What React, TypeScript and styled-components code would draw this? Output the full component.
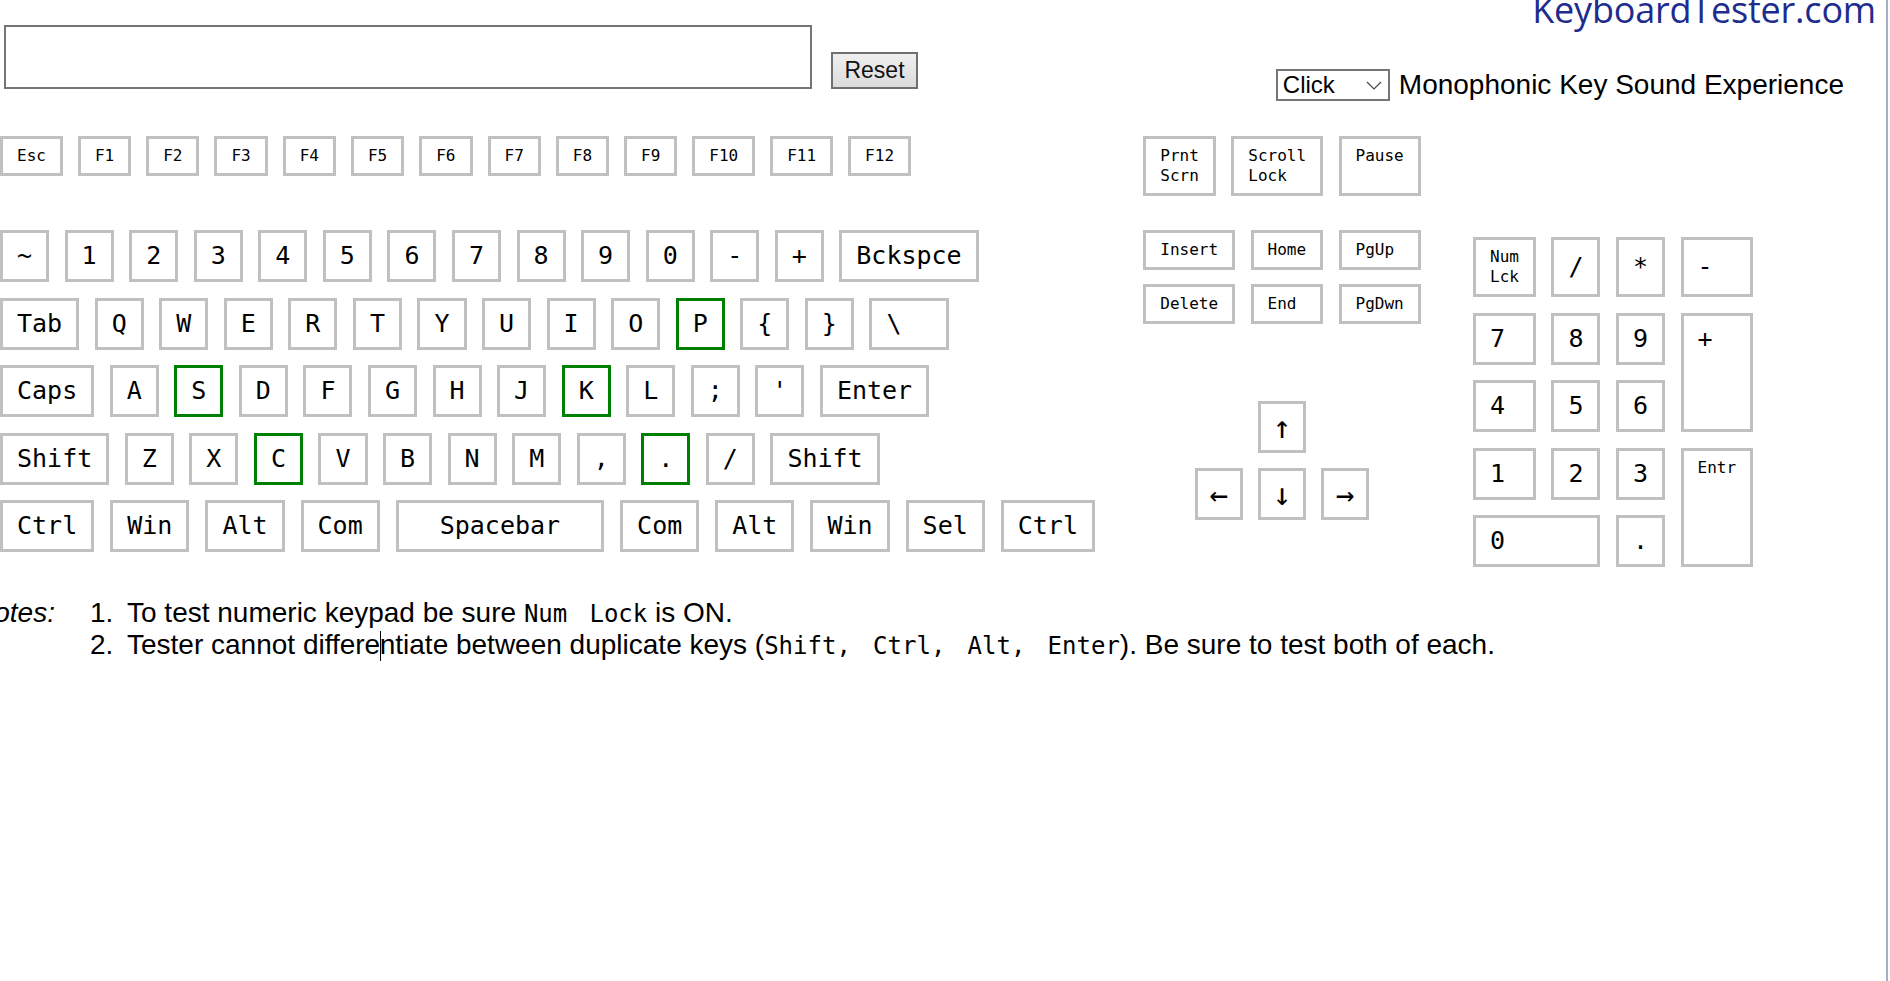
import React from "react";
import styled, { createGlobalStyle, css } from "styled-components";

const MONO = `"DejaVu Sans Mono", "Liberation Mono", monospace`;
const SANS = `"Liberation Sans", Arial, sans-serif`;

const GlobalStyle = createGlobalStyle`
  html, body {
    margin: 0;
    padding: 0;
    background: #fff;
  }
  body {
    font-family: ${SANS};
    color: #000;
    overflow: hidden;
  }
`;

const Page = styled.div`
  box-sizing: border-box;
  width: 1888px;
  min-height: 981px;
  border-right: 2px solid #a3b1c6;
`;

/* ---------- header ---------- */

const Header = styled.header`
  display: flex;
  justify-content: space-between;
  align-items: flex-start;
`;

const EntryRow = styled.div`
  display: flex;
  align-items: flex-end;
  gap: 19px;
  margin: 25px 0 0 4px;
`;

const TextEntry = styled.input`
  box-sizing: border-box;
  width: 808px;
  height: 64px;
  margin: 0;
  padding: 0 6px;
  border: 2px solid #767676;
  background: #fff;
  font: 24px ${SANS};
  outline: none;
`;

const ResetButton = styled.button`
  box-sizing: border-box;
  width: 87px;
  height: 37px;
  margin: 0;
  padding: 0;
  border: 2px solid #707070;
  background: linear-gradient(#efefef, #dcdcdc);
  color: #111;
  font: 23px ${SANS};
`;

const Branding = styled.div`
  display: flex;
  flex-direction: column;
  align-items: flex-end;
  padding-right: 10px;
`;

const Logo = styled.div`
  margin-top: -8px;
  color: #1e2c8e;
  font-family: "Open Sans", sans-serif;
  font-size: 36px;
  line-height: 36px;
  letter-spacing: -0.2px;
`;

const SoundRow = styled.div`
  display: flex;
  align-items: center;
  gap: 9px;
  margin: 41px 32px 0 0;
`;

const SoundSelect = styled.div`
  box-sizing: border-box;
  display: flex;
  align-items: center;
  justify-content: space-between;
  width: 114px;
  height: 32px;
  padding: 0 6px 0 5px;
  border: 2px solid #767676;
  font: 24px ${SANS};
`;

const SoundLabel = styled.span`
  font-size: 28px;
`;

/* ---------- keyboard ---------- */

const Keyboard = styled.section`
  display: flex;
  align-items: flex-start;
  margin-top: 35px;
`;

const MainBlock = styled.div`
  flex: none;
  width: 1143px;
`;

const FRow = styled.div`
  display: flex;
  gap: 15px;
`;

const Rows = styled.div`
  display: flex;
  flex-direction: column;
  gap: 15.5px;
  margin-top: 54px;
`;

const Row = styled.div<{ $gap?: number }>`
  display: flex;
  gap: ${(p) => p.$gap ?? 15.5}px;
`;

const NavBlock = styled.div`
  flex: none;
  display: flex;
  flex-direction: column;
  align-items: center;
  width: 278px;
  margin-right: 52px;
`;

const SysRow = styled.div`
  display: flex;
  gap: 15.5px;
`;

const EditGrid = styled.div`
  display: grid;
  grid-template-columns: repeat(3, auto);
  gap: 14px 15.5px;
  margin-top: 34px;
`;

const ArrowPad = styled.div`
  display: grid;
  grid-template-columns: repeat(3, auto);
  gap: 15px;
  margin-top: 77px;
`;

const Numpad = styled.div`
  display: grid;
  grid-template-columns: repeat(4, auto);
  grid-template-rows: 60px repeat(4, 52px);
  gap: 15.5px;
  margin-top: 101px;
`;

type KeyProps = {
  $small?: boolean;
  $on?: boolean;
  $top?: boolean;
  $arrow?: boolean;
  $pad?: number;
  $col?: string;
  $row?: string;
};

const Key = styled.div<KeyProps>`
  box-sizing: border-box;
  display: flex;
  align-items: ${(p) => (p.$top || p.$small ? "flex-start" : "center")};
  justify-content: flex-start;
  border: 3px solid ${(p) => (p.$on ? "#008000" : "#c0c0c0")};
  background: #fff;
  color: #000;
  font-family: ${MONO};
  white-space: pre;
  grid-column: ${(p) => p.$col ?? "auto"};
  grid-row: ${(p) => p.$row ?? "auto"};
  ${(p) =>
    p.$small
      ? css`
          font-size: 16px;
          line-height: 20px;
          padding: 7px 14px;
        `
      : p.$arrow
      ? css`
          font-size: 31px;
          line-height: 46px;
          padding: 0 11.7px;
        `
      : css`
          font-size: 25px;
          line-height: 46px;
          padding: 0 ${p.$pad ?? 14}px;
        `}
`;

/* ---------- notes ---------- */

const Notes = styled.div`
  display: flex;
  align-items: flex-start;
  margin-top: 30px;
  font-size: 28px;
`;

const NotesLabel = styled.div`
  flex: none;
  width: 116px;
  margin-left: -26px;
  font-style: italic;
`;

const NoteList = styled.div`
  display: flex;
  flex-direction: column;
`;

const NoteItem = styled.div`
  display: flex;
`;

const NoteNum = styled.span`
  flex: none;
  width: 37px;
`;

const Code = styled.span`
  font-family: ${MONO};
  font-size: 24px;
`;

const Caret = styled.span`
  display: inline-block;
  width: 0;
  height: 30px;
  margin-right: -1.5px;
  border-left: 1.5px solid #000;
  vertical-align: -7px;
`;

type KeyDef = string | { label: string; on?: boolean; pad?: number };

const F_KEYS = ["Esc", "F1", "F2", "F3", "F4", "F5", "F6", "F7", "F8", "F9", "F10", "F11", "F12"];

const ROWS: KeyDef[][] = [
  ["~", "1", "2", "3", "4", "5", "6", "7", "8", "9", "0", "-", "+", "Bckspce"],
  ["Tab", "Q", "W", "E", "R", "T", "Y", "U", "I", "O", { label: "P", on: true }, "{", "}", "\\  "],
  ["Caps", "A", { label: "S", on: true }, "D", "F", "G", "H", "J", { label: "K", on: true }, "L", ";", "'", "Enter"],
  ["Shift", "Z", "X", { label: "C", on: true }, "V", "B", "N", "M", ",", { label: ".", on: true }, "/", "Shift"],
  ["Ctrl", "Win", "Alt", "Com", { label: "Spacebar", pad: 41 }, "Com", "Alt", "Win", "Sel", "Ctrl"],
];

const ROW_GAPS = [15.5, 15.5, 15.5, 15.5, 16];

const NBSP = "\u00a0";

function Chevron() {
  return (
    <svg width="16" height="9" viewBox="0 0 16 9" fill="none">
      <path d="M1 1 L8 8 L15 1" stroke="#444" strokeWidth="1.2" />
    </svg>
  );
}

export default function App() {
  return (
    <Page>
      <GlobalStyle />
      <Header>
        <EntryRow>
          <TextEntry type="text" />
          <ResetButton>Reset</ResetButton>
        </EntryRow>
        <Branding>
          <Logo>KeyboardTester.com</Logo>
          <SoundRow>
            <SoundSelect>
              <span>Click</span>
              <Chevron />
            </SoundSelect>
            <SoundLabel>Monophonic Key Sound Experience</SoundLabel>
          </SoundRow>
        </Branding>
      </Header>

      <Keyboard>
        <MainBlock>
          <FRow>
            {F_KEYS.map((k) => (
              <Key key={k} $small>
                {k}
              </Key>
            ))}
          </FRow>
          <Rows>
            {ROWS.map((row, i) => (
              <Row key={i} $gap={ROW_GAPS[i]}>
                {row.map((k, j) => {
                  const d = typeof k === "string" ? { label: k } : k;
                  return (
                    <Key key={j} $on={d.on} $pad={d.pad}>
                      {d.label}
                    </Key>
                  );
                })}
              </Row>
            ))}
          </Rows>
        </MainBlock>

        <NavBlock>
          <SysRow>
            <Key $small>{"Prnt\nScrn"}</Key>
            <Key $small>{"Scroll\nLock"}</Key>
            <Key $small>Pause</Key>
          </SysRow>
          <EditGrid>
            <Key $small>Insert</Key>
            <Key $small>Home</Key>
            <Key $small>PgUp</Key>
            <Key $small>Delete</Key>
            <Key $small>End</Key>
            <Key $small>PgDwn</Key>
          </EditGrid>
          <ArrowPad>
            <Key $arrow $col="2">↑</Key>
            <Key $arrow $col="1" $row="2">←</Key>
            <Key $arrow $col="2" $row="2">↓</Key>
            <Key $arrow $col="3" $row="2">→</Key>
          </ArrowPad>
        </NavBlock>

        <Numpad>
          <Key $small>{"Num\nLck"}</Key>
          <Key>/</Key>
          <Key>*</Key>
          <Key>-</Key>
          <Key>7</Key>
          <Key>8</Key>
          <Key>9</Key>
          <Key $top $row="span 2">+</Key>
          <Key>4</Key>
          <Key>5</Key>
          <Key>6</Key>
          <Key>1</Key>
          <Key>2</Key>
          <Key>3</Key>
          <Key $small $row="span 2">Entr</Key>
          <Key $col="span 2">0</Key>
          <Key>.</Key>
        </Numpad>
      </Keyboard>

      <Notes>
        <NotesLabel>Notes:</NotesLabel>
        <NoteList>
          <NoteItem>
            <NoteNum>1.</NoteNum>
            <span>
              To test numeric keypad be sure <Code>{`Num${NBSP}`}</Code> <Code>Lock</Code> is ON.
            </span>
          </NoteItem>
          <NoteItem>
            <NoteNum>2.</NoteNum>
            <span>
              Tester cannot differe
              <Caret />
              ntiate between duplicate keys (<Code>{`Shift,${NBSP}`}</Code> <Code>{`Ctrl,${NBSP}`}</Code>{" "}
              <Code>{`Alt,${NBSP}`}</Code> <Code>Enter</Code>). Be sure to test both of each.
            </span>
          </NoteItem>
        </NoteList>
      </Notes>
    </Page>
  );
}
